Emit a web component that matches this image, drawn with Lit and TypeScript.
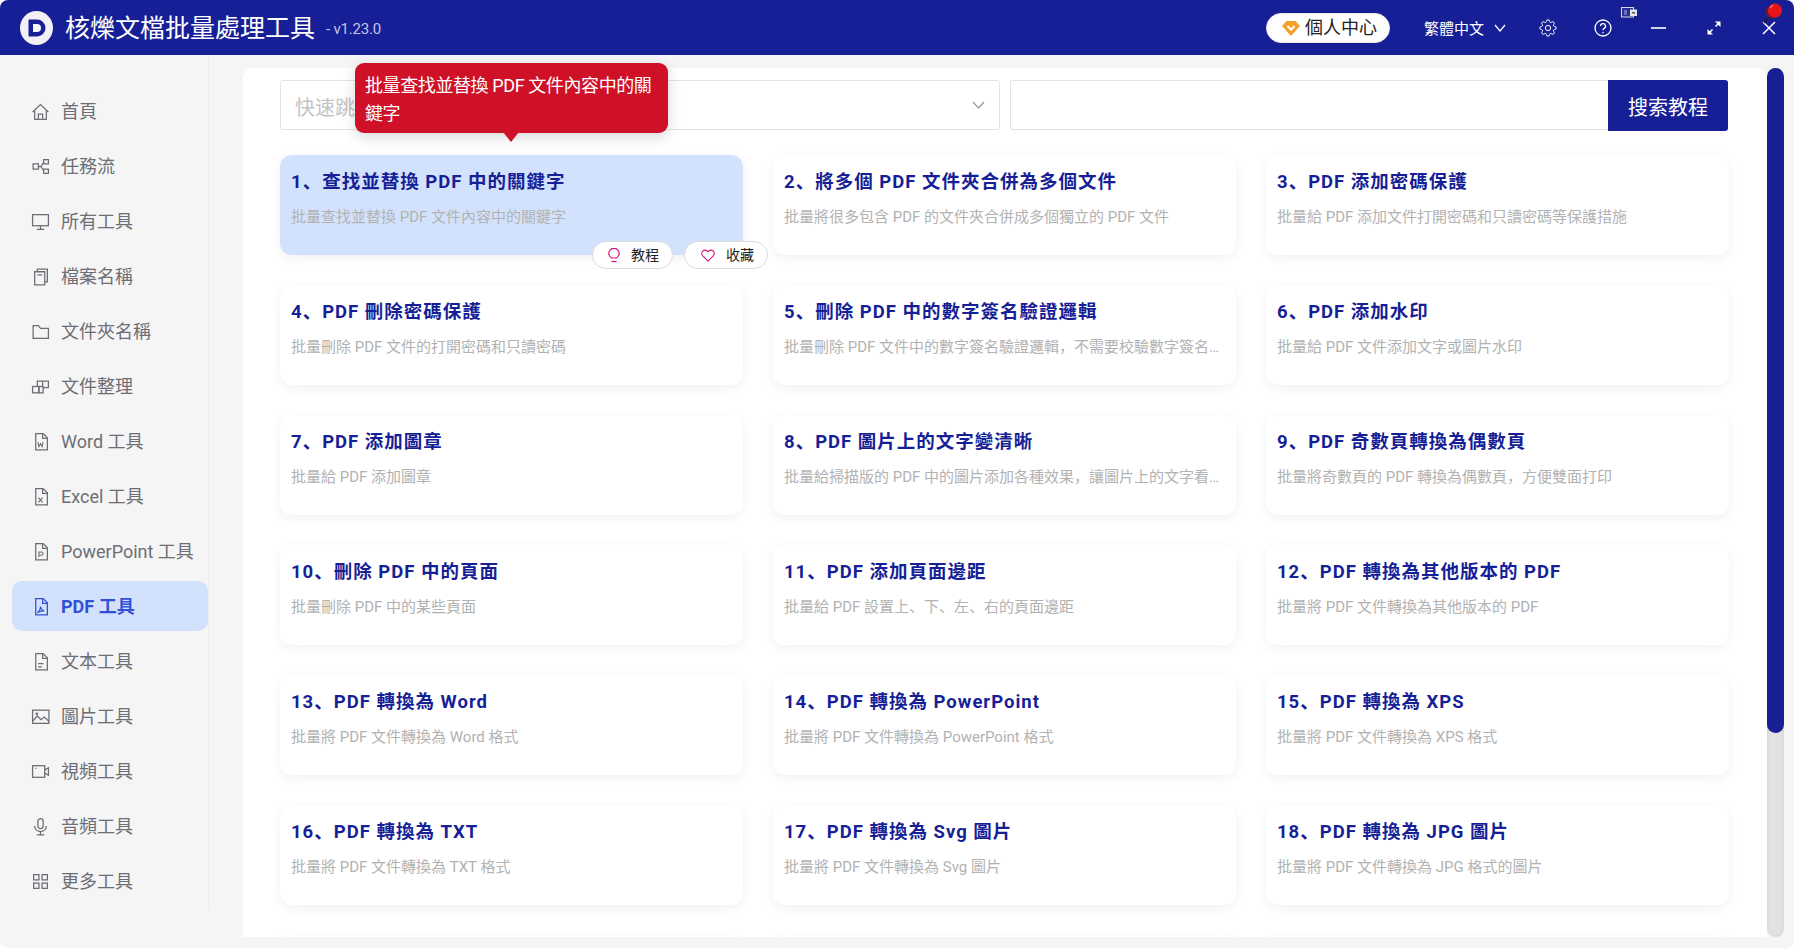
import { LitElement, html, css, svg } from "lit";
import { customElement } from "lit/decorators.js";

const fileBase = (inner: unknown) => svg`<path d="M4.500 1.500h7l4 4v11.500h-11z"/><path d="M11 1.500v4.500h4.500"/>${inner}`;
const navIcons: Record<string, unknown> = {
  home: svg`<path d="M1.500 9.500 9 2.500l7.500 7"/><path d="M3.500 8v8.500h11V8"/><path d="M7 16.500v-5h4v5"/>`,
  flow: svg`<rect x="2" y="6.500" width="5" height="5"/><rect x="12" y="2.500" width="4.500" height="4"/><rect x="12" y="11.500" width="4.500" height="4"/><path d="M7 9h2.500M9.500 9 12 5M9.500 9 12 13"/>`,
  screen: svg`<rect x="1.500" y="2.500" width="15" height="10.500"/><path d="M9 13v3M5.500 16.500h7"/>`,
  names: svg`<path d="M3.500 4.500h9.500v12.500H3.500z"/><path d="M6 4.500V2h9.500v12H13"/><path d="M6 7.500h4.500"/>`,
  folder: svg`<path d="M2 3.500h5l2 2.500h7.500v9.500H2z"/>`,
  organize: svg`<rect x="1.500" y="9" width="6" height="6"/><rect x="7.500" y="9" width="4" height="6"/><path d="M6 9V4h10.500v6h-5"/><path d="M11 4v5"/>`,
  word: fileBase(svg`<path d="M6.500 9.500l1 4.500 1.500-3 1.500 3 1-4.500" stroke-width="1"/>`),
  excel: fileBase(svg`<path d="M7 10l4 4.500M11 10l-4 4.500" stroke-width="1.100"/>`),
  ppt: fileBase(svg`<path d="M7.500 14.500V9.500h2.500a1.400 1.400 0 0 1 0 3H7.500" stroke-width="1"/>`),
  pdf: fileBase(svg`<path d="M6 15c2-1.500 3-4 3-6 .5 2.500 2 3.800 3.500 4.200-2-.2-4.500.2-6.500 1.800z" stroke-width="1"/>`),
  text: fileBase(svg`<path d="M6.800 11h5M6.800 14h3.500"/>`),
  image: svg`<rect x="1.500" y="3" width="15.500" height="12.500"/><path d="M2 13l4-4.500 3.500 3.500 3-2.500 4.500 4"/><circle cx="5.500" cy="6.500" r=".7"/>`,
  video: svg`<rect x="1.500" y="3.500" width="11.500" height="11"/><path d="M13 7.500l3.500-2v7l-3.500-2"/><path d="M4 6h1"/>`,
  audio: svg`<rect x="6.500" y="1.500" width="5" height="9.500" rx="2.500"/><path d="M3.500 8.500c0 7 11 7 11 0M9 14v3M5.500 17h7"/>`,
  more: svg`<rect x="2.500" y="2.500" width="5" height="5"/><rect x="10.500" y="2.500" width="5" height="5"/><rect x="2.500" y="10.500" width="5" height="5"/><rect x="10.500" y="10.500" width="5" height="5"/>`,
};

const nav: [string, string][] = [
  ["home", "首頁"], ["flow", "任務流"], ["screen", "所有工具"], ["names", "檔案名稱"], ["folder", "文件夾名稱"],
  ["organize", "文件整理"], ["word", "Word 工具"], ["excel", "Excel 工具"], ["ppt", "PowerPoint 工具"],
  ["pdf", "PDF 工具"], ["text", "文本工具"], ["image", "圖片工具"], ["video", "視頻工具"], ["audio", "音頻工具"], ["more", "更多工具"],
];

const cards: [string, string][] = [
  ["查找並替換 PDF 中的關鍵字", "批量查找並替換 PDF 文件內容中的關鍵字"],
  ["將多個 PDF 文件夾合併為多個文件", "批量將很多包含 PDF 的文件夾合併成多個獨立的 PDF 文件"],
  ["PDF 添加密碼保護", "批量給 PDF 添加文件打開密碼和只讀密碼等保護措施"],
  ["PDF 刪除密碼保護", "批量刪除 PDF 文件的打開密碼和只讀密碼"],
  ["刪除 PDF 中的數字簽名驗證邏輯", "批量刪除 PDF 文件中的數字簽名驗證邏輯，不需要校驗數字簽名即可打開文件"],
  ["PDF 添加水印", "批量給 PDF 文件添加文字或圖片水印"],
  ["PDF 添加圖章", "批量給 PDF 添加圖章"],
  ["PDF 圖片上的文字變清晰", "批量給掃描版的 PDF 中的圖片添加各種效果，讓圖片上的文字看起來更清晰"],
  ["PDF 奇數頁轉換為偶數頁", "批量將奇數頁的 PDF 轉換為偶數頁，方便雙面打印"],
  ["刪除 PDF 中的頁面", "批量刪除 PDF 中的某些頁面"],
  ["PDF 添加頁面邊距", "批量給 PDF 設置上、下、左、右的頁面邊距"],
  ["PDF 轉換為其他版本的 PDF", "批量將 PDF 文件轉換為其他版本的 PDF"],
  ["PDF 轉換為 Word", "批量將 PDF 文件轉換為 Word 格式"],
  ["PDF 轉換為 PowerPoint", "批量將 PDF 文件轉換為 PowerPoint 格式"],
  ["PDF 轉換為 XPS", "批量將 PDF 文件轉換為 XPS 格式"],
  ["PDF 轉換為 TXT", "批量將 PDF 文件轉換為 TXT 格式"],
  ["PDF 轉換為 Svg 圖片", "批量將 PDF 文件轉換為 Svg 圖片"],
  ["PDF 轉換為 JPG 圖片", "批量將 PDF 文件轉換為 JPG 格式的圖片"],
  ["", ""], ["", ""], ["", ""],
];

@customElement("app-root")
export class AppRoot extends LitElement {
  static styles = css`
    :host { display: block; width: 1794px; height: 948px; background: #fff; font-family: Roboto, "Noto Sans CJK SC", sans-serif; overflow: hidden; }
    * { box-sizing: border-box; }
    .window { width: 1794px; height: 948px; background: #f5f5f5; border-radius: 8px; overflow: hidden; display: flex; flex-direction: column; }
    header { height: 55px; flex: none; background: #171f96; display: flex; align-items: center; color: #fff; position: relative; }
    .logo { margin-left: 20px; width: 33px; height: 34px; flex: none; display: block; }
    h1 { margin: 2px 0 0 12px; font-size: 25px; font-weight: 400; line-height: 34px; color: #fff; }
    .ver { margin: 3px 0 0 11px; font-size: 15px; color: #c4c6e6; letter-spacing: -.2px; }
    .right { margin-left: auto; display: flex; align-items: center; height: 100%; }
    .vip { width: 124px; height: 30px; background: #fff; border-radius: 15px; display: flex; align-items: center; padding-left: 15px; gap: 5px; color: #222; font-size: 18px; line-height: 28px; border: 1px solid #e8e8e8; }
    .lang { margin-left: 34px; font-size: 15px; color: #fff; display: flex; align-items: center; gap: 10px; }
    .hi { display: block; flex: none; fill: none; stroke: #fff; stroke-width: 1.300; }
    .gear { margin-left: 33px; } .help { margin-left: 37px; }
    .min { margin-left: 39px; } .max { margin-left: 41px; } .close { margin: 0 18px 0 41px; }
    .tray { position: absolute; left: 1621px; top: 7px; }
    .pin { position: absolute; left: 1762px; top: 1px; }
    .body { flex: 1; display: flex; min-height: 0; }
    aside { width: 209px; flex: none; height: 853px; padding: 31px 0 0 12px; border-right: 1px solid #ededed; display: flex; flex-direction: column; gap: 5px; }
    .item { height: 50px; flex: none; width: 196px; border-radius: 10px; display: flex; align-items: center; color: #6d6e75; font-size: 18px; line-height: 26px; padding-left: 19px; gap: 11px; }
    .item span { margin-top: 2px; }
    .item svg { width: 19px; height: 19px; fill: none; stroke: currentColor; stroke-width: 1.200; flex: none; }
    .item.on { background: #d2e2fc; color: #3350d6; font-weight: 700; }
    .item.on svg { stroke: #3350d6; }
    .stage { margin: 13px 10px 11px 34px; flex: 1; display: flex; min-width: 0; position: relative; }
    .panel { flex: 1; background: #fff; border-radius: 10px 10px 0 0; padding: 12px 39px 0 37px; overflow: hidden; min-width: 0; }
    .scroll { width: 17px; flex: none; background: #e2e2e2; border-radius: 9px; border: 2px solid #dcdcdc; border-top: 0; position: relative; }
    .thumb { position: absolute; left: -2px; right: -2px; top: 0; height: 665px; background: #171f96; border-radius: 9px; }
    .search { display: flex; height: 50px; gap: 10px; }
    .select { width: 720px; flex: none; border: 1.500px solid #e3e3e3; border-radius: 3px; display: flex; align-items: center; justify-content: space-between; padding: 0 14px; font-size: 20px; color: #c4c4c4; line-height: 30px; }
    .select span { margin-top: 6px; }
    .select svg { fill: none; stroke: #9a9a9a; stroke-width: 1.300; }
    .input { flex: 1; display: flex; border: 1.500px solid #e3e3e3; border-right: 0; border-radius: 3px; }
    .btn { margin: -1.500px 0 -1.500px auto; width: 120px; background: #171f96; color: #fff; border-radius: 0 3px 3px 0; font-size: 20px; line-height: 56px; text-align: center; }
    .grid { margin-top: 25px; display: grid; grid-template-columns: repeat(3, 463px); gap: 30px; grid-auto-rows: 100px; }
    .card { background: #fff; border-radius: 12px; box-shadow: 0 3px 12px rgba(0,0,0,.06); padding: 12px 11px 0; position: relative; min-width: 0; }
    .card.on { background: #d2e2fc; }
    .t { font-size: 18.500px; font-weight: 700; line-height: 30px; color: #171f96; letter-spacing: 1px; white-space: nowrap; }
    .d { margin-top: 9px; font-size: 15px; line-height: 22px; color: #b2b2b2; white-space: nowrap; overflow: hidden; text-overflow: ellipsis; }
    .pills { position: absolute; left: 312px; top: 86px; display: flex; gap: 11px; }
    .pill { height: 28px; width: 81px; flex: none; border: 1px solid #dcdcdc; border-radius: 14px; background: #fff; display: flex; align-items: center; font-size: 14px; color: #222; line-height: 26px; padding-left: 15px; gap: 11px; white-space: nowrap; }
    .pill.fav { width: 84px; padding-left: 16px; }
    .pill svg { fill: none; stroke: #d6127f; stroke-width: 1.200; flex: none; }
    .tip { position: absolute; left: 112px; top: -5px; width: 313px; height: 70px; background: #ce1127; border-radius: 9px; color: #fff; font-size: 18px; line-height: 27.500px; letter-spacing: -.4px; padding: 9px 8px 0 10px; box-shadow: 0 4px 14px rgba(0,0,0,.16); z-index: 2; }
    .tip::after { content: ""; position: absolute; left: 148px; bottom: -9px; width: 16px; height: 10px; background: #ce1127; clip-path: polygon(0 0, 100% 0, 50% 100%); }
  `;

  render() {
    return html`<div class="window">
      <header>
        <svg class="logo" viewBox="0 0 33 34">
          <ellipse cx="16.500" cy="17" rx="16.500" ry="17" fill="#f1f1f5"/>
          <path d="M8.500 8.500h8.500a8.500 8.500 0 0 1 0 17H8.500z" fill="#171f96"/>
          <path d="M13 13h4a4 4 0 0 1 0 8h-4z" fill="#f4f5fb"/>
        </svg>
        <h1>核爍文檔批量處理工具</h1>
        <span class="ver">- v1.23.0</span>
        <div class="right">
          <div class="vip">
            <svg width="18" height="16" viewBox="0 0 18 16"><path d="M4.500 1h9L18 6l-9 10L0 6z" fill="#f5a02a"/><path d="M5.500 6 9 9.800 12.500 6" fill="none" stroke="#fff" stroke-width="2"/></svg>
            <span>個人中心</span>
          </div>
          <div class="lang"><span>繁體中文</span>
            <svg class="hi" width="12" height="8" viewBox="0 0 12 8"><path d="M1 1l5 6 5-6"/></svg></div>
          <svg class="hi gear" width="18" height="18" viewBox="0 0 24 24" stroke-width="1.700"><circle cx="12" cy="12" r="3.500"/><path d="M19.400 15a1.650 1.650 0 0 0 .33 1.820l.06.06a2 2 0 0 1 0 2.830 2 2 0 0 1-2.830 0l-.06-.06a1.650 1.650 0 0 0-1.820-.33 1.650 1.650 0 0 0-1 1.510V21a2 2 0 0 1-2 2 2 2 0 0 1-2-2v-.09A1.650 1.650 0 0 0 9 19.400a1.650 1.650 0 0 0-1.820.33l-.06.06a2 2 0 0 1-2.830 0 2 2 0 0 1 0-2.830l.06-.06a1.650 1.650 0 0 0 .33-1.820 1.650 1.650 0 0 0-1.510-1H3a2 2 0 0 1-2-2 2 2 0 0 1 2-2h.09A1.650 1.650 0 0 0 4.600 9a1.650 1.650 0 0 0-.33-1.820l-.06-.06a2 2 0 0 1 0-2.830 2 2 0 0 1 2.830 0l.06.06a1.650 1.650 0 0 0 1.820.33H9a1.650 1.650 0 0 0 1-1.510V3a2 2 0 0 1 2-2 2 2 0 0 1 2 2v.09a1.650 1.650 0 0 0 1 1.510 1.650 1.650 0 0 0 1.820-.33l.06-.06a2 2 0 0 1 2.830 0 2 2 0 0 1 0 2.830l-.06.06a1.650 1.650 0 0 0-.33 1.820V9a1.650 1.650 0 0 0 1.510 1H21a2 2 0 0 1 2 2 2 2 0 0 1-2 2h-.09a1.650 1.650 0 0 0-1.510 1z"/></svg>
          <svg class="hi help" width="18" height="18" viewBox="0 0 18 18"><circle cx="9" cy="9" r="8"/><path d="M6.500 7a2.500 2.500 0 1 1 3.600 2.300C9.300 9.800 9 10.200 9 11.200M9 13v1.200"/></svg>
          <svg class="hi min" width="15" height="2" viewBox="0 0 15 2"><path d="M0 1h15" stroke-width="1.600"/></svg>
          <svg class="hi max" width="14" height="14" viewBox="0 0 14 14"><path d="M2 12l3.500-3.500M8.500 5.500 12 2" stroke-width="1.500"/><path d="M.5 8v5.500H6zM8 .5h5.500V6z" fill="#fff" stroke="none"/></svg>
          <svg class="hi close" width="14" height="14" viewBox="0 0 14 14"><path d="M1 1l12 12M13 1 1 13" stroke-width="1.500"/></svg>
        </div>
        <svg class="tray" width="16" height="11" viewBox="0 0 16 11"><rect x=".5" y=".5" width="12" height="9.500" fill="#2a308f" stroke="#d8d8e0"/><rect x="3" y="3" width="3" height="5" fill="#6a6fc0"/><rect x="9" y="2.500" width="7" height="6.500" fill="#e4e4ea"/><rect x="11" y="5" width="3" height="1.500" fill="#555"/></svg>
        <svg class="pin" width="22" height="24" viewBox="0 0 22 24"><path d="M6 17l-4 5" stroke="#2a1a20" stroke-width="1.800"/><ellipse cx="10.500" cy="11" rx="7" ry="6.500" fill="#6a1a2a"/><circle cx="13" cy="9.500" r="7" fill="#e8141c"/><path d="M11 4l-3 3" stroke="#ff6a60" stroke-width="1.500"/></svg>
      </header>
      <div class="body">
        <aside>
          ${nav.map(([k, label]) => html`<div class="item ${k === "pdf" ? "on" : ""}"><svg viewBox="0 0 18 18">${navIcons[k]}</svg><span>${label}</span></div>`)}
        </aside>
        <div class="stage">
          <div class="panel">
            <div class="search">
              <div class="select"><span>快速跳轉</span><svg width="13" height="8" viewBox="0 0 13 8"><path d="M1 1l5.500 6L12 1"/></svg></div>
              <div class="input"><div class="btn">搜索教程</div></div>
            </div>
            <div class="grid">
              ${cards.map(([t, d], i) => html`<div class="card ${i === 0 ? "on" : ""}">
                ${t ? html`<div class="t">${i + 1}、${t}</div><div class="d">${d}</div>` : ""}
                ${i === 0 ? html`<div class="pills">
                  <div class="pill"><svg width="12" height="15" viewBox="0 0 12 15"><path d="M3.500 10C2 9 .8 7.500 .8 5.500a5.200 5.200 0 0 1 10.400 0c0 2-1.200 3.500-2.700 4.500z"/><path d="M3.500 13.500h5"/></svg><span>教程</span></div>
                  <div class="pill fav"><svg width="14" height="13" viewBox="0 0 15 14"><path d="M7.500 13 1.800 7.300a3.500 3.500 0 0 1 5-5l.7.700.7-.7a3.500 3.500 0 0 1 5 5z"/></svg><span>收藏</span></div>
                </div>` : ""}
              </div>`)}
            </div>
          </div>
          <div class="scroll"><div class="thumb"></div></div>
          <div class="tip">批量查找並替換 PDF 文件內容中的關鍵字</div>
        </div>
      </div>
    </div>`;
  }
}
